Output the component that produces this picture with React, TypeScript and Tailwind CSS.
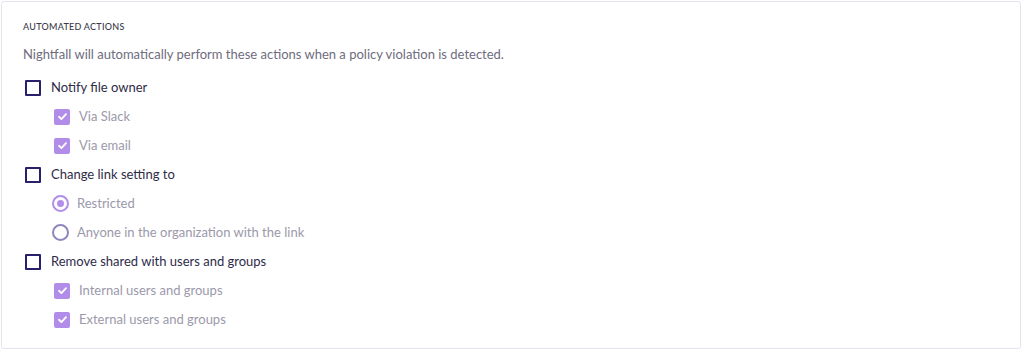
import React from 'react';

interface SubOption {
  label: string;
  type: 'check' | 'radio';
  selected: boolean;
}

interface Action {
  label: string;
  options: SubOption[];
}

const actions: Action[] = [
  {
    label: 'Notify file owner',
    options: [
      { label: 'Via Slack', type: 'check', selected: true },
      { label: 'Via email', type: 'check', selected: true },
    ],
  },
  {
    label: 'Change link setting to',
    options: [
      { label: 'Restricted', type: 'radio', selected: true },
      { label: 'Anyone in the organization with the link', type: 'radio', selected: false },
    ],
  },
  {
    label: 'Remove shared with users and groups',
    options: [
      { label: 'Internal users and groups', type: 'check', selected: true },
      { label: 'External users and groups', type: 'check', selected: true },
    ],
  },
];

const CheckMark = () => (
  <svg className="w-[11px] h-[11px]" viewBox="0 0 12 12" fill="none" stroke="white" strokeWidth={2} strokeLinecap="round" strokeLinejoin="round">
    <path d="M2.2 6.3l2.6 2.5L9.8 3.4" />
  </svg>
);

const SubRow: React.FC<{ option: SubOption }> = ({ option }) => {
  if (option.type === 'radio') {
    return (
      <div className="flex items-center h-[29px] pl-[29px]">
        <span
          className={
            option.selected
              ? 'w-[17px] h-[17px] rounded-full border-2 border-[#b08ee9] flex items-center justify-center'
              : 'w-[17px] h-[17px] rounded-full border-2 border-[#8f86bd]'
          }
        >
          {option.selected && <span className="w-[7px] h-[7px] rounded-full bg-[#b08ee9]" />}
        </span>
        <span className="ml-[8px] text-[13px] text-[#9b99aa]">{option.label}</span>
      </div>
    );
  }
  return (
    <div className="flex items-center h-[29px] pl-[31px]">
      <span className="w-[16px] h-[16px] rounded-[2px] bg-[#b18de9] flex items-center justify-center">
        <CheckMark />
      </span>
      <span className="ml-[9px] text-[13px] text-[#9b99aa]">{option.label}</span>
    </div>
  );
};

export default function App() {
  return (
    <div className="w-[1024px] h-[351px] bg-white p-[1px]" style={{ fontFamily: 'Lato, "Noto Sans", sans-serif' }}>
      <div className="h-[348px] w-[1020px] border border-[#e4e4ee] rounded-[3px] pl-[21px] pt-[18px]">
        <h3 className="text-[9px] tracking-[0.03em] uppercase text-[#3a3a4a] font-medium leading-[14px]">Automated actions</h3>
        <p className="mt-[11px] text-[13px] text-[#6e6c7e] leading-[18px]">
          Nightfall will automatically perform these actions when a policy violation is detected.
        </p>
        <div className="mt-[10px]">
          {actions.map((action) => (
            <div key={action.label}>
              <div className="flex items-center h-[29px] pl-[2px]">
                <span className="w-[16px] h-[16px] border-2 border-[#27216b] rounded-[1px]" />
                <span className="ml-[10px] text-[13px] text-[#2e2b48]">{action.label}</span>
              </div>
              {action.options.map((opt) => (
                <SubRow key={opt.label} option={opt} />
              ))}
            </div>
          ))}
        </div>
      </div>
    </div>
  );
}
